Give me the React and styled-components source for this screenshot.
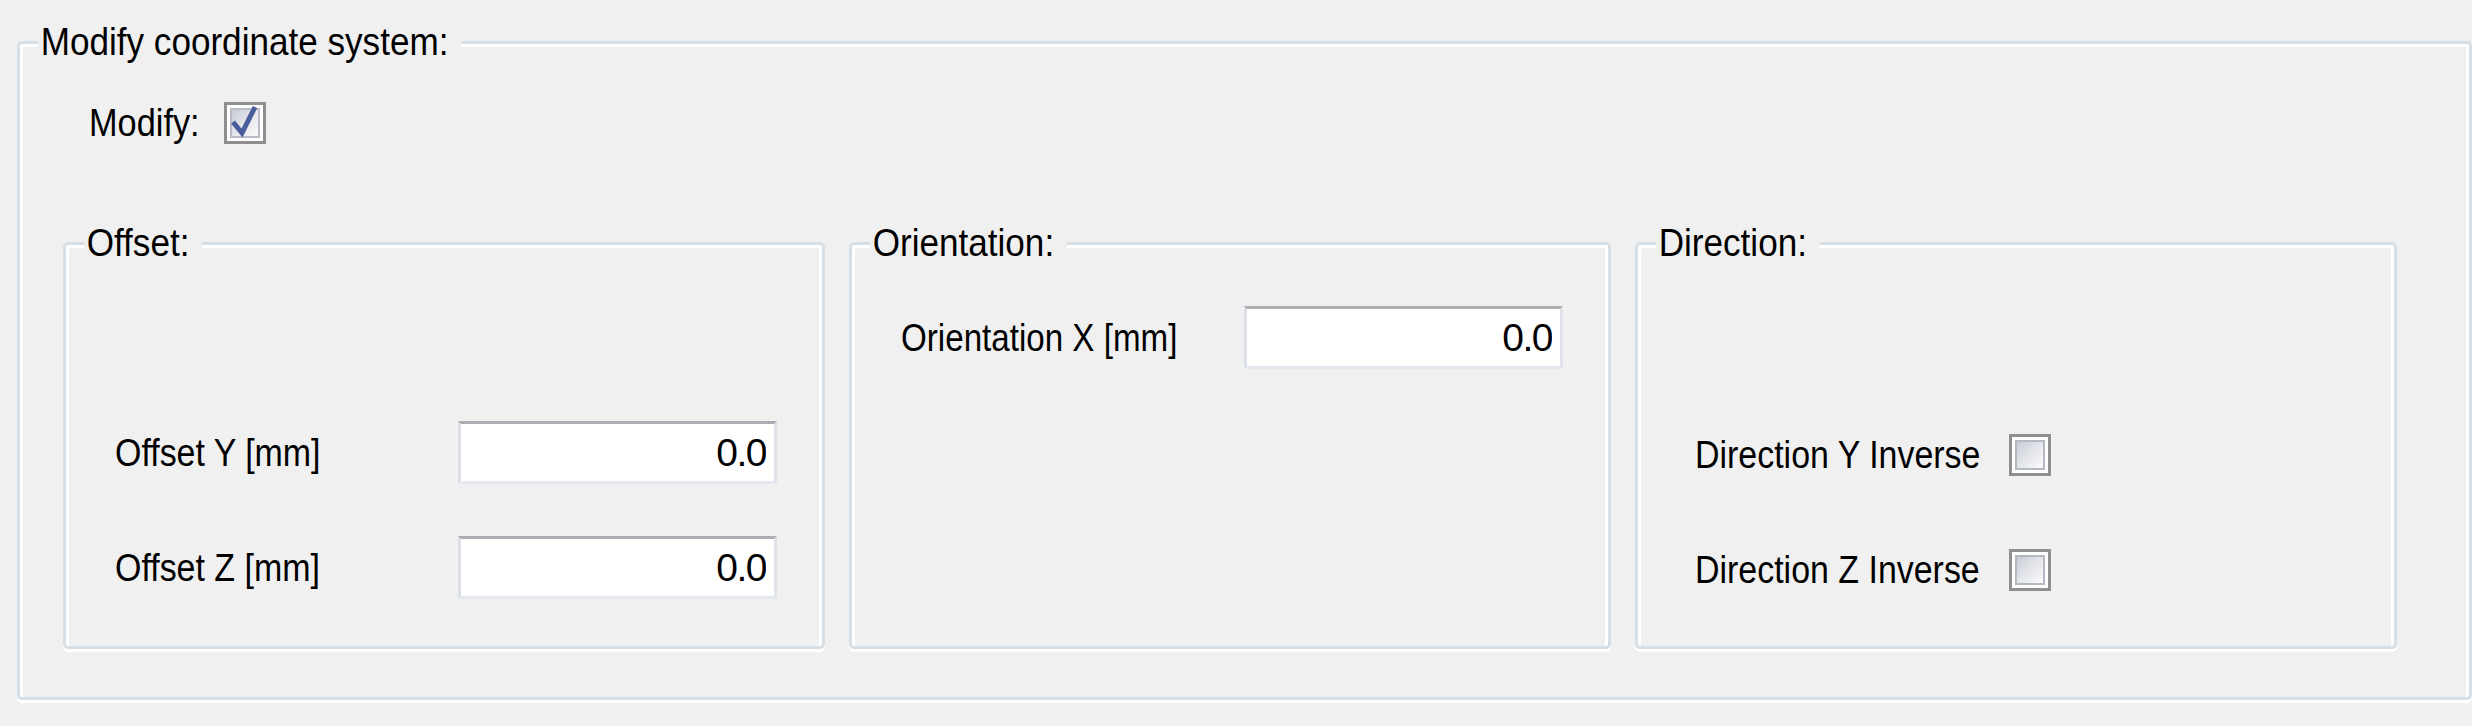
import React from 'react'
import styled, { createGlobalStyle } from 'styled-components'

const GlobalStyle = createGlobalStyle`
  html, body {
    margin: 0;
    background: #f0f0f0;
  }
  body {
    font-family: 'Liberation Sans', Arial, sans-serif;
    font-size: 39px;
    color: #000;
  }
`

// the screenshot's UI font is narrower than Liberation Sans, so text is squeezed horizontally
const CheckBox = ({ checked }) => (
  <Check>
    <CheckFace $checked={checked} />
    {checked && (
      <Tick viewBox="0 0 36 36">
        <path d="M6 17 L15 28 L28 2" />
      </Tick>
    )}
  </Check>
)

const App = () => {
  return (
    <Page>
      <GlobalStyle />
      <Frame $height="659px">
        <Caption>Modify coordinate system:</Caption>
        <Body>
          <ModifyRow>
            <Label $width="135px" $sx={0.88}>Modify:</Label>
            <CheckBox checked />
          </ModifyRow>
          <Panels>
            <Frame>
              <Caption>Offset:</Caption>
              <Rows $top="176px">
                <Row $indent="49px">
                  <Label $width="343px">Offset Y [mm]</Label>
                  <Field readOnly value="0.0" />
                </Row>
                <Row $indent="49px">
                  <Label $width="343px">Offset Z [mm]</Label>
                  <Field readOnly value="0.0" />
                </Row>
              </Rows>
            </Frame>
            <Frame>
              <Caption>Orientation:</Caption>
              <Rows $top="61px">
                <Row $indent="49px">
                  <Label $width="343px" $sx={0.85}>Orientation X [mm]</Label>
                  <Field readOnly value="0.0" />
                </Row>
              </Rows>
            </Frame>
            <Frame>
              <Caption>Direction:</Caption>
              <Rows $top="178px">
                <Row $indent="57px">
                  <Label $width="314px">Direction Y Inverse</Label>
                  <CheckBox />
                </Row>
                <Row $indent="57px">
                  <Label $width="314px">Direction Z Inverse</Label>
                  <CheckBox />
                </Row>
              </Rows>
            </Frame>
          </Panels>
        </Body>
      </Frame>
    </Page>
  )
}

export default App

const Page = styled.div`
  box-sizing: border-box;
  width: 2472px;
  height: 726px;
  padding: 41px 0 0 17px;
`
const Frame = styled.div`
  position: relative;
  box-sizing: border-box;
  width: 100%;
  height: ${p => p.$height || '100%'};
  border: 3px solid #d5dfe5;
  border-radius: 5px;
  box-shadow: inset 3px 3px 0 #fff, inset -3px 0 0 #fff, 0 3px 0 #fff;
`
const Caption = styled.span`
  position: absolute;
  top: -24px;
  left: 18px;
  display: inline-block;
  padding: 0 14px 0 3px;
  background: #f0f0f0;
  line-height: 44px;
  white-space: nowrap;
  transform: scaleX(0.9);
  transform-origin: left center;
`
const Body = styled.div`
  box-sizing: border-box;
  display: flex;
  flex-direction: column;
  height: 100%;
  padding: 57px 45px 48px 43px;
`
const ModifyRow = styled.div`
  display: flex;
  align-items: center;
  padding-left: 26px;
`
const Panels = styled.div`
  display: grid;
  grid-template-columns: repeat(3, 762px);
  column-gap: 24px;
  height: 409px;
  margin-top: 97px;
`
const Rows = styled.div`
  display: flex;
  flex-direction: column;
  row-gap: 52px;
  padding-top: ${p => p.$top};
`
const Row = styled.div`
  display: flex;
  align-items: center;
  height: 63px;
  padding-left: ${p => p.$indent};
`
const Label = styled.span`
  flex-shrink: 0;
  width: ${p => p.$width};
  line-height: 44px;
  white-space: nowrap;
  transform: scaleX(${p => p.$sx || 0.87});
  transform-origin: left center;
`
const Field = styled.input`
  box-sizing: border-box;
  width: 319px;
  height: 63px;
  margin: 0;
  padding: 0 8px 0 0;
  border-style: solid;
  border-width: 3px;
  border-color: #abadb3 #e2e3ea #e3e9ef #dbdfe6;
  background: #fff;
  font: inherit;
  letter-spacing: -1.5px;
  color: #000;
  text-align: right;
  outline: none;
`
const Check = styled.span`
  position: relative;
  box-sizing: border-box;
  display: flex;
  flex-shrink: 0;
  width: 42px;
  height: 42px;
  padding: 3px;
  border: 3px solid #8f8f8f;
  background: #fff;
`
const CheckFace = styled.span`
  flex: 1;
  border: 2px solid ${p => (p.$checked ? '#b7bcc8' : '#b4b8c2')};
  background: linear-gradient(135deg, #c8ccd6 0%, #e4e6ea 50%, #fbfbfb 100%);
`
const Tick = styled.svg`
  position: absolute;
  left: 0;
  top: 0;
  width: 36px;
  height: 36px;
  overflow: visible;
  path {
    fill: none;
    stroke: #4a5d9c;
    stroke-width: 5;
    stroke-linejoin: miter;
  }
`
